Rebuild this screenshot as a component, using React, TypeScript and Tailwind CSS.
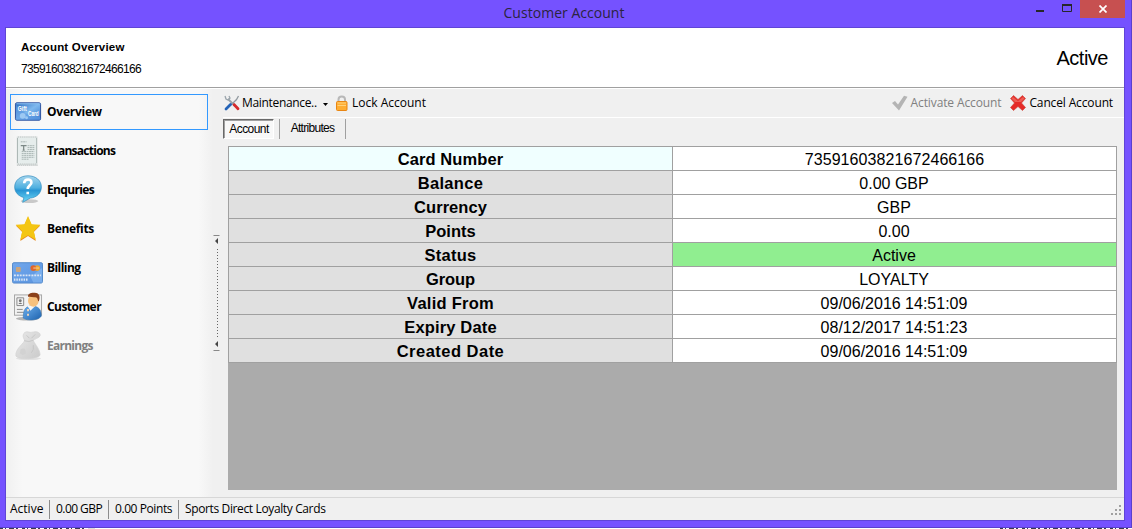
import React from "react";

const seg = "font-['Open_Sans','Noto_Sans',sans-serif]";
const ari = "font-['Liberation_Sans',Arial,sans-serif]";

function GiftIcon() {
  return (
    <svg width="30" height="32" viewBox="0 0 30 32">
      <defs><linearGradient id="gc" x1="0" y1="0" x2="1" y2="1"><stop offset="0" stopColor="#2468bd" /><stop offset=".5" stopColor="#7fb9ee" /><stop offset="1" stopColor="#3577cd" /></linearGradient></defs>
      <rect x="1.5" y="6.5" width="26" height="18" rx="1.5" fill="url(#gc)" stroke="#2b4f9e" />
      <path d="M2.500 7.500h24" stroke="#8fc2f2" />
      <path d="M2 8q7 12 25 13v3H2Z" fill="#5f9be2" opacity=".6" />
      <circle cx="9" cy="20" r="3" fill="#b4d8f8" opacity=".7" />
      <circle cx="13" cy="22" r="1.500" fill="#b4d8f8" opacity=".7" />
      <text x="4" y="15" fontSize="7.500" fontWeight="bold" fill="#fff" fontFamily="Liberation Sans" textLength="9" lengthAdjust="spacingAndGlyphs">Gift</text>
      <text x="14.500" y="20.500" fontSize="7.500" fontWeight="bold" fill="#fff" fontFamily="Liberation Sans" textLength="11" lengthAdjust="spacingAndGlyphs">Card</text>
    </svg>
  );
}
function ReceiptIcon() {
  return (
    <svg width="30" height="32" viewBox="0 0 30 32">
      <rect x="3.500" y="1.500" width="20" height="28" fill="#e6edec" stroke="#a3b0ae" />
      <path d="M3 1.500h21M3 29.500h21" stroke="#f8f8f8" strokeDasharray="1 1" strokeWidth="1.500" />
      <path d="M3 30.700h22" stroke="#8b9694" strokeDasharray="1.500 .5" strokeWidth=".6" />
      <path d="M7 6.500h6M14 10.500h7M14 12.500h7M14 14.500h7M8 16.500h13M8 18.500h13M8 20.500h13M8 22.500h13M8 24.500h7" stroke="#a7b3b1" strokeDasharray="2 .5" />
      <path d="M7 10.500h6M10 10v5M9 15h2" stroke="#7d8987" strokeWidth="1.300" />
    </svg>
  );
}
function QuestionIcon() {
  return (
    <svg width="30" height="32" viewBox="0 0 30 32">
      <defs><linearGradient id="qb" x1="0" y1="0" x2="0" y2="1"><stop offset="0" stopColor="#a6d6ee" /><stop offset=".45" stopColor="#4fb0e0" /><stop offset=".55" stopColor="#2895d4" /><stop offset="1" stopColor="#6fdcf8" /></linearGradient></defs>
      <ellipse cx="16" cy="27.500" rx="9" ry="2" fill="#999" opacity=".5" />
      <path d="M14.500 1.300c8 0 13.800 4.800 13.800 11.500 0 6.500-5 11-11.500 11.600L9 28.800l1.200-5C4.500 22.300.7 18.300.7 12.800.7 6.100 6.500 1.300 14.500 1.300Z" fill="url(#qb)" stroke="#2c88bd" strokeWidth=".7" />
      <path d="M10.500 9c.3-5 8-5 7.500-.4-.3 2.400-3.800 3-3.800 6.400M14.200 17.800v2.600" fill="none" stroke="#fff" strokeWidth="2.700" />
    </svg>
  );
}
function StarIcon() {
  return (
    <svg width="30" height="32" viewBox="0 0 30 32">
      <path d="m14.500 3.500 3.700 8 9 1-6.700 6.500 2 9.300-8-5-8 5 2-9.300-6.700-6.500 9-1Z" fill="#e98a1e" />
      <path d="m14.500 2.500 3.700 8.500 9 .7-6.700 6.500 2 9-8-4.700-8 4.700 2-9-6.700-6.500 9-.7Z" fill="#f4c613" />
    </svg>
  );
}
function BillingIcon() {
  return (
    <svg width="32" height="32" viewBox="0 0 32 32" className="relative top-px">
      <defs><linearGradient id="bc" x1="0" y1="0" x2="1" y2="1"><stop offset="0" stopColor="#71a7ec" /><stop offset="1" stopColor="#5a94df" /></linearGradient></defs>
      <rect x=".5" y="9.500" width="31" height="21" rx="1.500" fill="url(#bc)" stroke="#5388c9" />
      <path d="M19 24l12-9v15h-9Z" fill="#8bbcf3" opacity=".6" />
      <rect x="4" y="14" width="5" height="5" rx="1" fill="#c9a47d" />
      <circle cx="26" cy="15" r="3" fill="#eea52d" /><circle cx="22" cy="15" r="3" fill="#e0662b" /><path d="M22 15h6" stroke="#f3d39a" />
      <path d="M2 22.500h28" stroke="#d9e5f5" strokeDasharray="2 1" strokeWidth="1.800" />
      <path d="M2 27h14" stroke="#dce8f6" strokeDasharray="1.500 1" strokeWidth="2.200" />
    </svg>
  );
}
function CustomerIcon() {
  return (
    <svg width="30" height="32" viewBox="0 0 30 32">
      <defs><linearGradient id="cu" x1="0" y1="0" x2="1" y2="1"><stop offset="0" stopColor="#6db0ee" /><stop offset="1" stopColor="#1d62ae" /></linearGradient></defs>
      <rect x=".5" y="3.500" width="28" height="21" fill="#f2f2f2" stroke="#a6a6a6" />
      <path d="M3 6.500h7v8H3ZM3 18.500h6M3 21.500h8" fill="none" stroke="#888" />
      <circle cx="6.500" cy="9.500" r="1.500" fill="#777" /><path d="M4.500 13q2-3 4 0Z" fill="#777" />
      <ellipse cx="14" cy="28" rx="12" ry="2" fill="#888" opacity=".6" />
      <path d="M9.500 27.500c0-9 2.500-12.500 9-12.500 7 0 10 4 9.700 10.500-2 4-14 5.500-18.700 2Z" fill="url(#cu)" stroke="#3270ad" strokeWidth=".5" />
      <path d="m14 15 3 5 5-5Z" fill="#f8f8f8" />
      <ellipse cx="20" cy="9.500" rx="5.500" ry="6.300" fill="#f7c17d" />
      <path d="M14.500 5.500C14 2 18 .9 21.500 1.300c5 0 6 5 4 9-1.500-2-.5-4-3.500-4.500-2.500.7-5-1-7.500-.3Z" fill="#8b411b" />
      <path d="M14.500 18v2.500M14.500 23v2" stroke="#f0d6ba" strokeWidth="2" />
    </svg>
  );
}
function BagIcon() {
  return (
    <svg width="30" height="32" viewBox="0 0 30 32">
      <defs><linearGradient id="mb" x1="0" y1="0" x2="1" y2="1"><stop offset="0" stopColor="#e8e8e8" /><stop offset="1" stopColor="#cbcbcb" /></linearGradient></defs>
      <ellipse cx="15" cy="29" rx="13" ry="1.600" fill="#e2e2e2" />
      <path d="M11 2c3-2 5 1 9-.5 4-1 8 1 7 4-1 2.500-6 3-7 5 2 4 7 9 7 15-2 4-22 5-25 1-1-7 6-11 9-16-1-3-3-5 0-8.500Z" fill="url(#mb)" stroke="#d2d2d2" strokeWidth=".7" />
      <path d="M10.500 10.500q5 2 9.500-.5M13 5l3 3M22 4l-4 4M20 15q1 5-2 8" fill="none" stroke="#c6c6c6" />
      <path d="M7 19q6-2 5 5l-3 1.500-3-2Z" fill="#d2d2d2" />
    </svg>
  );
}

function ToolsIcon() {
  return (
    <svg width="16" height="16" viewBox="0 0 16 16">
      <path d="M4 4l7 7" stroke="#9aa3a9" strokeWidth="2" />
      <path d="M1 1l1 3 2 1 2-2-1-2" fill="none" stroke="#9aa4ab" strokeWidth="1.300" />
      <path d="M10 9.500 14 13.700" stroke="#d5292b" strokeWidth="2.800" strokeLinecap="round" />
      <path d="m14.500 1-2 3.500L7 10" stroke="#90989e" strokeWidth="1.300" fill="none" />
      <path d="M6.500 9.500 2 14" stroke="#2563b8" strokeWidth="2.800" strokeLinecap="round" />
    </svg>
  );
}
function LockIcon() {
  return (
    <svg width="14" height="16" viewBox="0 0 14 16">
      <path d="M3.500 7V4.500c0-4 6.500-4 6.500 0V7" fill="none" stroke="#b8b8b8" strokeWidth="2" />
      <rect x="1.500" y="6.500" width="10.500" height="9" rx="1" fill="#ffad32" stroke="#e98613" />
      <path d="M2.500 8h8.500M2.500 10.500h8.500" stroke="#ffd27b" />
    </svg>
  );
}

const nav = [
  { label: "Overview", icon: <GiftIcon />, fit: "tracking-[-0.25px]" },
  { label: "Transactions", icon: <ReceiptIcon />, fit: "tracking-[-0.74px]" },
  { label: "Enquries", icon: <QuestionIcon />, fit: "tracking-[-0.66px]" },
  { label: "Benefits", icon: <StarIcon />, fit: "tracking-[-0.34px]" },
  { label: "Billing", icon: <BillingIcon />, fit: "tracking-[-0.55px]" },
  { label: "Customer", icon: <CustomerIcon />, fit: "tracking-[-0.55px]" },
  { label: "Earnings", icon: <BagIcon />, fit: "tracking-[-0.74px]" },
];

const rows = [
  { name: "Card Number", value: "73591603821672466166", fit: "tracking-[0.08px]" },
  { name: "Balance", value: "0.00 GBP", fit: "tracking-[0.3px]" },
  { name: "Currency", value: "GBP", fit: "tracking-[0.05px]" },
  { name: "Points", value: "0.00", fit: "tracking-[0px]" },
  { name: "Status", value: "Active", fit: "tracking-[0.3px]" },
  { name: "Group", value: "LOYALTY", fit: "tracking-[-0.1px]" },
  { name: "Valid From", value: "09/06/2016 14:51:09", fit: "tracking-[0.25px]" },
  { name: "Expiry Date", value: "08/12/2017 14:51:23", fit: "tracking-[0.16px]" },
  { name: "Created Date", value: "09/06/2016 14:51:09", fit: "tracking-[0.48px]" },
];

export default function App() {
  return (
    <div className={`${seg} flex h-[529px] w-[1132px] flex-col overflow-hidden bg-white text-[12px] leading-4 whitespace-nowrap text-black`}>
      <div className="flex h-[528px] w-[1132px] shrink-0 flex-col border-r border-b border-[#5b40cc] bg-[#7552ff] pl-[5px]">
        <header className="grid h-[27px] shrink-0 grid-cols-[1fr_auto_1fr]">
          <span />
          <h1 className="relative -left-1 pt-[3px] text-[14px] leading-5 tracking-[0.03px] text-[#2b2440]">Customer Account</h1>
          <div className="flex justify-end pr-[6px]">
            <svg width="45" height="18" viewBox="0 0 45 18"><path d="M1 11h8" stroke="#26262a" strokeWidth="2" /><path d="M27.500 5.500h9v6h-9Z" fill="none" stroke="#26262a" /><path d="M27 5h10" stroke="#26262a" strokeWidth="2" /></svg>
            <div className="flex h-[18px] w-[45px] items-center justify-center bg-[#c75050]"><svg width="8" height="8" viewBox="0 0 8 8" className="ml-px"><path d="m.5.500 7 7m0-7-7 7" stroke="#fff" strokeWidth="1.700" /></svg></div>
          </div>
        </header>
        <main className="flex h-[494px] w-[1120px] flex-col border border-[#5f45d6] bg-[#f0f0f0]">
          <section className="flex h-[60px] shrink-0 items-start justify-between border-b border-[#a0a0a0] bg-white pr-4 pl-[15px]">
            <div className={ari}>
              <h2 className="pt-3 text-[11.5px] leading-[15px] font-bold tracking-[0.2px]">Account Overview</h2>
              <p className="mt-[6px] text-[12px] leading-4 tracking-[-0.67px]">73591603821672466166</p>
            </div>
            <strong className={`${ari} pt-[18px] text-[20px] leading-6 font-normal tracking-[-0.5px]`}>Active</strong>
          </section>
          <div className="flex h-[409px] shrink-0 border-t border-white">
            <nav className="flex w-[207px] shrink-0 flex-col gap-[3px] bg-[linear-gradient(90deg,#f0f0f0,#f8f8f8_8%,#f8f8f8_93%,#f0f0f0)] pt-[5px] pl-1">
              {nav.map((item, i) => (
                <div key={item.label} className={`flex h-9 w-[198px] items-center border ${i === 0 ? "border-[#3399ff]" : "border-transparent"}`}>
                  <span className={`flex w-8 shrink-0 ${i === 4 ? "pl-px" : "pl-[3px]"}`}>{item.icon}</span>
                  <span className={`pl-1 font-bold ${item.fit} ${i === 6 ? "text-[#808080]" : ""}`}>{item.label}</span>
                </div>
              ))}
            </nav>
            <div className="flex w-[10px] shrink-0 flex-col pt-[144px]">
              <svg width="7" height="118" viewBox="0 0 7 118"><path d="M.5 2.500h6M.5 117.500h6" stroke="#888" /><path d="m5 5-3 3 3 3ZM5 108l-3 3 3 3Z" fill="#444" /><path d="M4.500 16v90" stroke="#666" strokeDasharray="1 2" /></svg>
            </div>
            <div className="flex w-[901px] flex-col">
              <div className="flex h-[29px] shrink-0 items-center border-b border-white pr-[11px] pl-px">
                <ToolsIcon /><span className="ml-[2px] w-[76px] tracking-[-0.33px]">Maintenance..</span>
                <svg width="5" height="3" viewBox="0 0 5 3" className="mt-0.5 ml-[5px]"><path d="M0 0h5L2.500 3Z" fill="#000" /></svg>
                <span className="ml-[7px]"><LockIcon /></span><span className="ml-[3px]">Lock Account</span>
                <div className="ml-auto flex items-center">
                  <svg width="16" height="16" viewBox="0 0 16 16" className="-ml-0.5"><path d="m0 8 3-2 3 3.500L12 .8l3.500 1L7 15.500Z" fill="#b4b4b4" /></svg>
                  <span className="ml-[3px] tracking-[-0.12px] text-[#808080]">Activate Account</span>
                  <svg width="16" height="16" viewBox="0 0 16 16" className="ml-[9px]"><path d="m3.500.5 4.500 4 4.500-4 3 3-4 4.500 4 4.500-3 3-4.500-4-4.500 4-3-3 4-4.500-4-4.500Z" fill="#e52b28" stroke="#c94137" strokeWidth=".6" /><path d="m3 2 5 4 5-4 1.500 1.500L11 7H5L1.500 3.500Z" fill="#f17468" opacity=".7" /></svg>
                  <span className="ml-[3px] tracking-[-0.14px]">Cancel Account</span>
                </div>
              </div>
              <div className={`${ari} flex h-[20px] shrink-0 text-[12px]`}>
                <div className="mt-px h-5 w-[51px] border border-t-[#696969] border-r-white border-b-white border-l-[#696969] bg-[#f8f8f8] pt-px pl-px text-center tracking-[-0.55px] shadow-[inset_1px_1px_0_#a0a0a0]">Account</div>
                <div className="mt-px ml-[5px] h-5 w-[67px] border-r border-l border-[#a0a0a0] pt-px text-center tracking-[-0.7px]">Attributes</div>
              </div>
              <div className={`${ari} mt-[8px] ml-[5px] h-[344px] w-[889px] shrink-0 bg-[#ababab] text-[16px]`}>
                <table className="w-[889px] table-fixed border-collapse">
                  <tbody>{rows.map((row, i) => (
                    <tr key={row.name} className="h-6">
                      <th className={`h-6 w-[444px] border border-[#a0a0a0] p-0 pt-[2px] text-[16.5px] leading-[21px] ${row.fit} ${i === 0 ? "bg-[#f0ffff]" : "bg-[#e0e0e0]"}`}>{row.name}</th>
                      <td className={`border border-[#a0a0a0] p-0 pt-[2px] text-center leading-[21px] ${i === 0 ? "tracking-[0.08px]" : "pr-px"} ${i === 4 ? "bg-[#90ee90]" : "bg-white"}`}>{row.value}</td>
                    </tr>
                  ))}</tbody>
                </table>
              </div>
            </div>
          </div>
          <footer className="flex h-[23px] shrink-0 items-center border-t border-[#d7d7d7] pl-1">
            <span className="w-[39px]">Active</span>
            <span className="flex h-[19px] w-[59px] items-center border-l border-[#8c8c8c] pl-[6px] tracking-[-0.55px]">0.00 GBP</span>
            <span className="flex h-[19px] w-[70px] items-center border-l border-[#8c8c8c] pl-[6px] tracking-[-0.42px]">0.00 Points</span>
            <span className="flex h-[19px] items-center border-l border-[#8c8c8c] pl-[6px] tracking-[-0.37px]">Sports Direct Loyalty Cards</span>
            <svg width="12" height="12" viewBox="0 0 12 12" className="mt-1 mr-px ml-auto"><path d="M8 0h2v2H8ZM4 4h2v2H4ZM8 4h2v2H8ZM0 8h2v2H0ZM4 8h2v2H4ZM8 8h2v2H8Z" fill="#a0a0a0" /></svg>
          </footer>
        </main>
      </div>
      <svg width="1132" height="1" viewBox="0 0 1132 1" className="shrink-0"><path d="M0 .5h84M1000 .5h132" stroke="#3a3a50" strokeDasharray="3 2 1 3 5 2 2 4" /><path d="M88 .5h7" stroke="#ddd" /></svg>
    </div>
  );
}
